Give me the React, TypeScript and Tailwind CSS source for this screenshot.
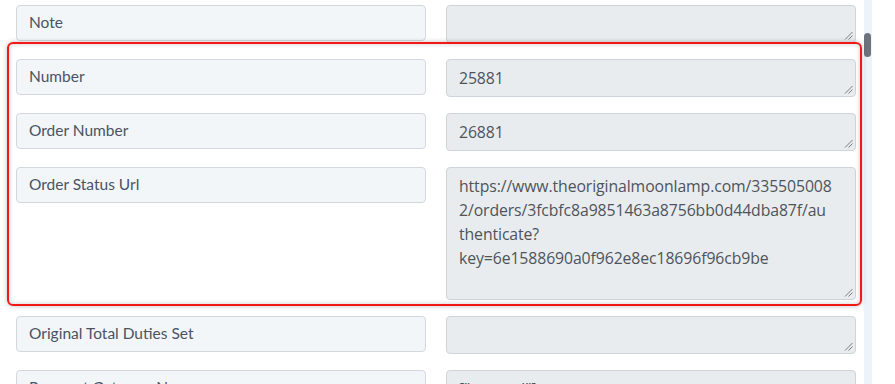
import React from "react";

function Grip() {
  return (
    <svg className="absolute right-[2px] bottom-[2px]" width="9" height="9" viewBox="0 0 9 9">
      <line x1="1" y1="8.5" x2="8.5" y2="1" stroke="#6b6f75" strokeWidth="0.9" />
      <line x1="4.5" y1="8.5" x2="8.5" y2="4.5" stroke="#6b6f75" strokeWidth="0.9" />
    </svg>
  );
}

type Row = { label: string; lines: string[]; tall?: boolean };

const rows: Row[] = [
  { label: "Note", lines: [] },
  { label: "Number", lines: ["25881"] },
  { label: "Order Number", lines: ["26881"] },
  {
    label: "Order Status Url",
    lines: [
      "https://www.theoriginalmoonlamp.com/335505008",
      "2/orders/3fcbfc8a9851463a8756bb0d44dba87f/au",
      "thenticate?",
      "key=6e1588690a0f962e8ec18696f96cb9be",
    ],
    tall: true,
  },
  { label: "Original Total Duties Set", lines: [] },
  { label: "Payment Gateway Names", lines: ['["manual"]'] },
];

export default function App() {
  return (
    <div className="relative flex h-[384px] w-[895px] overflow-hidden bg-white">
      <div className="flex w-[864px] flex-col gap-[16px] pl-[16px] pt-[5px]">
        {rows.map((r) => (
          <div key={r.label} className="flex items-start gap-[20px]">
            <div
              className="flex h-[36px] w-[410px] shrink-0 items-center rounded-[4px] border border-[#d3d8df] bg-[#f3f6f9] pl-[12px] text-[15.5px] text-[#4a5363]"
              style={{ fontFamily: "Lato, 'Noto Sans', sans-serif" }}
            >
              {r.label}
            </div>
            <div
              className={`relative w-[410px] shrink-0 rounded-[4px] border border-[#cfd4da] bg-[#e9ecef] px-[12px] py-[6px] text-[15.8px] leading-[24px] tracking-[-0.1px] text-[#4d545b] ${
                r.tall ? "h-[133px]" : "h-[38px]"
              }`}
              style={{ fontFamily: "'Open Sans', 'Noto Sans', sans-serif" }}
            >
              {r.lines.map((l) => (
                <div key={l} className="whitespace-nowrap">
                  {l}
                </div>
              ))}
              <Grip />
            </div>
          </div>
        ))}
      </div>
      <div className="relative h-full w-[8px] bg-[#edf3fb]">
        <div className="absolute left-0 top-[33px] h-[24px] w-[7px] rounded-[4px] bg-[#6c737c]" />
      </div>
      <div className="flex-1 bg-white" />
      <div className="pointer-events-none absolute left-[7px] top-[42px] h-[264px] w-[855px] rounded-[6px] border-2 border-[#f21818] shadow-[0_0_5px_rgba(0,0,0,0.25),inset_0_0_5px_rgba(0,0,0,0.2)]" />
    </div>
  );
}
